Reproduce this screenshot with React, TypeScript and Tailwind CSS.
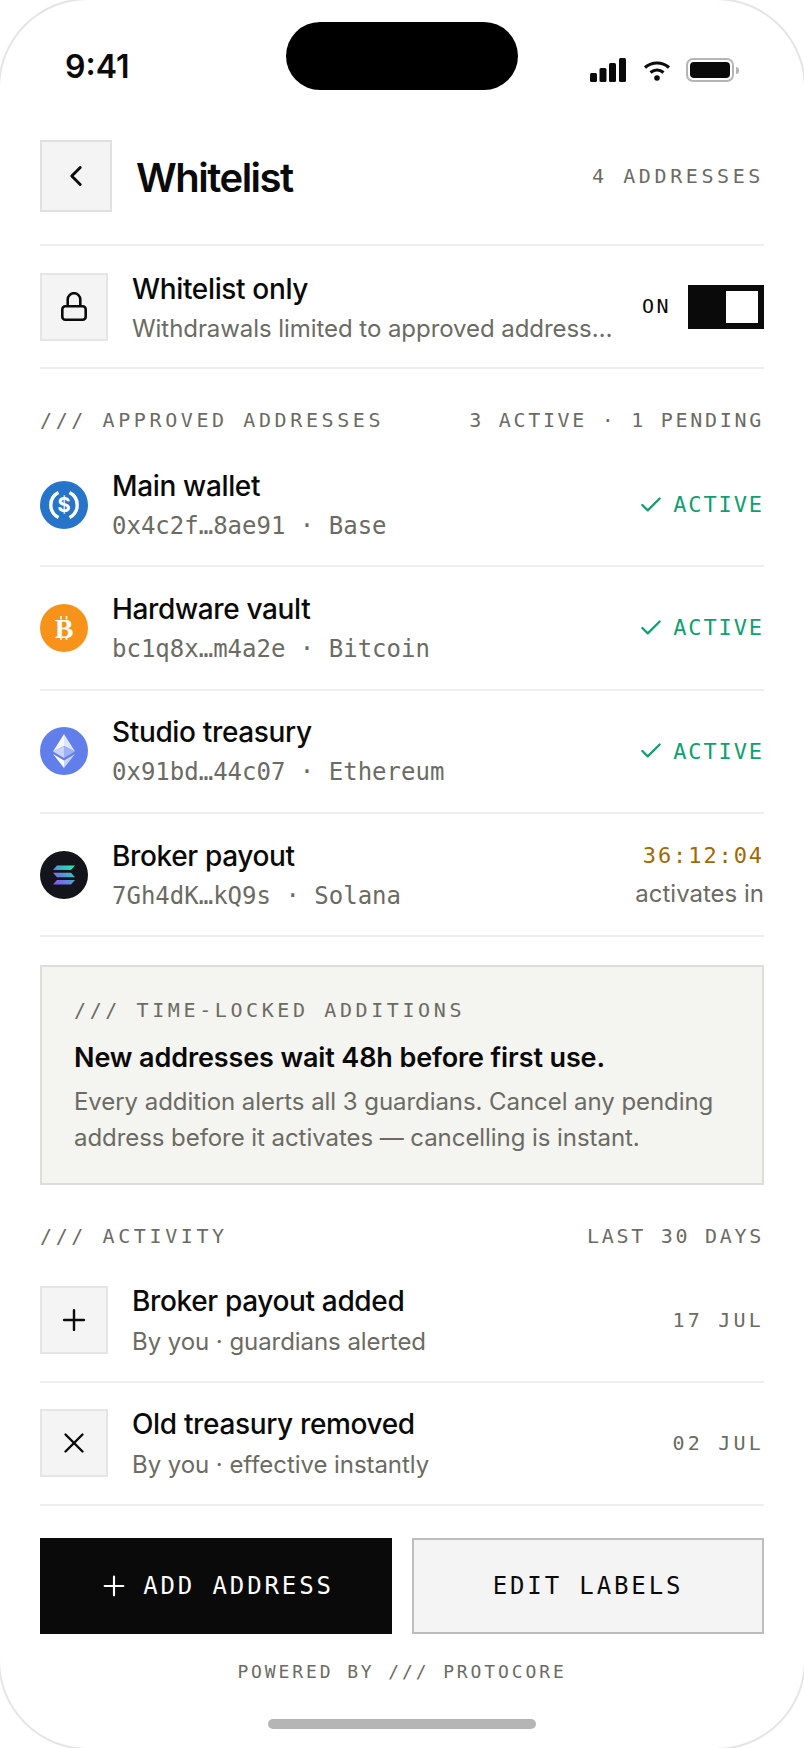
import { Check, ChevronLeft, Plus, X } from 'lucide-react';

const mono = "font-['DejaVu_Sans_Mono',monospace]";

function UsdcIcon() {
  return (
    <svg viewBox="0 0 48 48" className="w-12 h-12 shrink-0">
      <circle cx="24" cy="24" r="24" fill="#2775ca" />
      <path d="M18.5 11.5 A14 14 0 0 0 18.5 36.5" fill="none" stroke="#fff" strokeWidth="3.4" />
      <path d="M29.5 11.5 A14 14 0 0 1 29.5 36.5" fill="none" stroke="#fff" strokeWidth="3.4" />
      <text x="24" y="31" textAnchor="middle" fontSize="20" fontWeight="700" fill="#fff" fontFamily="Inter, sans-serif">$</text>
    </svg>
  );
}

function BtcIcon() {
  return (
    <svg viewBox="0 0 48 48" className="w-12 h-12 shrink-0">
      <circle cx="24" cy="24" r="24" fill="#f7931a" />
      <text x="24" y="33.500" textAnchor="middle" fontSize="28" fontWeight="700" fill="#fff" fontFamily="'Liberation Serif', serif">B</text>
      <path d="M21 12v3.500M26.500 12v3.500M21 33v3M26.500 33v3" stroke="#fff" strokeWidth="1.600" />
    </svg>
  );
}

function EthIcon() {
  return (
    <svg viewBox="0 0 48 48" className="w-12 h-12 shrink-0">
      <circle cx="24" cy="24" r="24" fill="#627eea" />
      <path d="M24 7 L13 24.500 L24 19z" fill="#fff" fillOpacity="0.95" />
      <path d="M24 7 L35 24.500 L24 19z" fill="#fff" fillOpacity="0.8" />
      <path d="M13 24.500 L24 19 L24 31z" fill="#c9d4fa" />
      <path d="M35 24.500 L24 19 L24 31z" fill="#9fb2f5" />
      <path d="M13 27 L24 33.500 L24 41z" fill="#fff" />
      <path d="M35 27 L24 33.500 L24 41z" fill="#c9d4fa" />
    </svg>
  );
}

function SolIcon() {
  return (
    <svg viewBox="0 0 48 48" className="w-12 h-12 shrink-0">
      <defs>
        <linearGradient id="sol" x1="0" y1="1" x2="1" y2="0">
          <stop offset="0" stopColor="#9945ff" />
          <stop offset="0.5" stopColor="#5497d5" />
          <stop offset="1" stopColor="#19fb9b" />
        </linearGradient>
      </defs>
      <circle cx="24" cy="24" r="24" fill="#14141c" />
      <path d="M17 14.500h18l-4 4.500h-18z M13 21.700h18l4 4.500h-18z M17 29h18l-4 4.500h-18z" fill="url(#sol)" />
    </svg>
  );
}

function SectionHeading({ left, right, rightClass }: { left: string; right: string; rightClass: string }) {
  return (
    <div className={`flex justify-between text-[20px] leading-[30px] text-[#6b6b63] whitespace-nowrap ${mono}`}>
      <span className="tracking-[3.6px]">{left}</span>
      <span className={rightClass}>{right}</span>
    </div>
  );
}

const addresses = [
  { name: 'Main wallet', sub: '0x4c2f…8ae91 · Base', icon: <UsdcIcon /> },
  { name: 'Hardware vault', sub: 'bc1q8x…m4a2e · Bitcoin', icon: <BtcIcon /> },
  { name: 'Studio treasury', sub: '0x91bd…44c07 · Ethereum', icon: <EthIcon /> },
  { name: 'Broker payout', sub: '7Gh4dK…kQ9s · Solana', icon: <SolIcon />, pending: true },
];

const activity = [
  { title: 'Broker payout added', sub: 'By you · guardians alerted', date: '17 JUL', icon: <Plus size={34} strokeWidth={1.7} /> },
  { title: 'Old treasury removed', sub: 'By you · effective instantly', date: '02 JUL', icon: <X size={34} strokeWidth={1.7} /> },
];

export default function App() {
  return (
    <div className="w-[804px] h-[1748px] bg-white overflow-hidden">
      <div className="relative w-[804px] h-[1748px] rounded-[88px] shadow-[0_0_0_2px_#e5e5e5] font-['Inter',sans-serif] text-[#0a0a0a]">
        <div className="absolute left-[286px] top-[22px] w-[232px] h-[68px] rounded-[34px] bg-black" />

        <div className="flex justify-between items-center h-[140px] px-[65px]">
          <span className="text-[32px] leading-[40px] font-semibold mb-[6px]">9:41</span>
          <div className="flex items-center">
            <svg width="36" height="24" viewBox="0 0 36 24" className="mr-[17px]">
              <rect x="0" y="15" width="7" height="9" rx="1.500" fill="#0a0a0a" />
              <rect x="9.500" y="10" width="7" height="14" rx="1.500" fill="#0a0a0a" />
              <rect x="19" y="5" width="7" height="19" rx="1.500" fill="#0a0a0a" />
              <rect x="29" y="0" width="7" height="24" rx="1.500" fill="#0a0a0a" />
            </svg>
            <svg width="28" height="21" viewBox="0 0 28 21" className="mr-[15px]" fill="none" stroke="#0a0a0a" strokeWidth="3.200">
              <path d="M2 7.500 C9 1.500 19 1.500 26 7.500" />
              <path d="M7.500 12.500 C11.500 9.200 16.500 9.200 20.500 12.500" />
              <circle cx="14" cy="18" r="2.800" fill="#0a0a0a" stroke="none" />
            </svg>
            <div className="box-border w-[48px] h-[24px] border-2 border-[#b5b5b5] rounded-[7px] p-[2px]">
              <div className="w-full h-full bg-[#0a0a0a] rounded-[4px]" />
            </div>
            <div className="w-[3px] h-[7px] ml-[2px] bg-[#b5b5b5] rounded-r-[3px]" />
          </div>
        </div>

        <div className="px-[40px]">
          <div className="flex items-center h-[72px]">
            <div className="box-border w-[72px] h-[72px] border-2 border-[#e0e0e0] bg-[#f4f4f4] flex items-center justify-center">
              <ChevronLeft size={34} strokeWidth={2} />
            </div>
            <h1 className="ml-[24px] pt-[3px] text-[40px] leading-[48px] font-semibold tracking-[-1.5px]">Whitelist</h1>
            <span className={`ml-auto text-[20px] text-[#6b6b63] tracking-[3.6px] ${mono}`}>4 ADDRESSES</span>
          </div>
          <div className="h-[2px] mt-[32px] bg-[#eeeeee]" />

          <div className="flex items-center h-[121px] border-b-2 border-[#eeeeee] box-content">
            <div className="box-border w-[68px] h-[68px] shrink-0 border-2 border-[#e5e5e5] bg-[#f4f4f4] flex items-center justify-center">
              <svg width="26" height="29" viewBox="0 0 26 29" fill="none" stroke="#0a0a0a" strokeWidth="2.600">
                <rect x="1.300" y="14.200" width="23.400" height="13.500" rx="3" />
                <path d="M6.700 14 V7.500 a6.300 6.300 0 0 1 12.600 0 V14" />
              </svg>
            </div>
            <div className="ml-[24px] pt-[4px] min-w-0 w-[486px]">
              <div className="text-[28px] leading-[36px] font-medium tracking-[-0.35px]">Whitelist only</div>
              <div className="mt-[4px] text-[24px] leading-[36px] tracking-[-0.06px] text-[#6b6b63] truncate">Withdrawals limited to approved addresses only</div>
            </div>
            <span className={`ml-auto mr-[17px] mb-[2px] text-[20px] tracking-[2.4px] ${mono}`}>ON</span>
            <div className="box-border w-[76px] h-[44px] bg-[#0a0a0a] p-[6px] flex justify-end shrink-0">
              <div className="w-[32px] h-[32px] bg-white" />
            </div>
          </div>

          <div className="mt-[36px]">
            <SectionHeading left="/// APPROVED ADDRESSES" right="3 ACTIVE · 1 PENDING" rightClass="tracking-[2.7px]" />
          </div>

          <div className="mt-[9px]">
            {addresses.map((a) => (
              <div key={a.name} className="flex items-center h-[123.33px] border-b-2 border-[#eeeeee]">
                {a.icon}
                <div className="ml-[24px] pt-[2px]">
                  <div className="text-[28px] leading-[36px] font-medium tracking-[-0.35px]">{a.name}</div>
                  <div className={`mt-[4px] text-[24px] leading-[36px] text-[#6b6b63] whitespace-pre ${mono}`}>{a.sub}</div>
                </div>
                {a.pending ? (
                  <div className="ml-auto text-right">
                    <div className={`text-[22px] leading-[32px] text-[#a16a00] tracking-[1.9px] ${mono}`}>36:12:04</div>
                    <div className="mt-[7px] text-[24px] leading-[30px] text-[#6b6b63]">activates in</div>
                  </div>
                ) : (
                  <div className="ml-auto flex items-center text-[#10a070]">
                    <Check size={26} strokeWidth={2.1} />
                    <span className={`ml-[9px] text-[22px] tracking-[1.9px] ${mono}`}>ACTIVE</span>
                  </div>
                )}
              </div>
            ))}
          </div>

          <div className="box-border h-[220px] mt-[28px] border-2 border-[#dddddb] bg-[#f4f4f0] px-[32px] pt-[28px]">
            <div className={`text-[20px] leading-[30px] text-[#6b6b63] tracking-[3.6px] ${mono}`}>/// TIME-LOCKED ADDITIONS</div>
            <div className="mt-[15px] text-[27px] leading-[36px] font-semibold tracking-[-0.12px]">New addresses wait 48h before first use.</div>
            <div className="mt-[8px] text-[24px] leading-[36px] tracking-[-0.06px] text-[#6b6b63]">
              Every addition alerts all 3 guardians. Cancel any pending address before it activates — cancelling is instant.
            </div>
          </div>

          <div className="mt-[36px]">
            <SectionHeading left="/// ACTIVITY" right="LAST 30 DAYS" rightClass="tracking-[2.7px]" />
          </div>

          <div className="mt-[9px]">
            {activity.map((r) => (
              <div key={r.title} className="flex items-center h-[123px] pb-[2px] border-b-2 border-[#eeeeee]">
                <div className="box-border w-[68px] h-[68px] shrink-0 border-2 border-[#e5e5e5] bg-[#f4f4f4] flex items-center justify-center">
                  {r.icon}
                </div>
                <div className="ml-[24px] pt-[3px]">
                  <div className="text-[28px] leading-[36px] font-medium tracking-[-0.35px]">{r.title}</div>
                  <div className="mt-[5px] text-[24px] leading-[36px] tracking-[-0.06px] text-[#6b6b63]">{r.sub}</div>
                </div>
                <span className={`ml-auto text-[20px] text-[#6b6b63] tracking-[3.2px] ${mono}`}>{r.date}</span>
              </div>
            ))}
          </div>

          <div className="flex gap-[20px] mt-[32px]">
            <button className={`w-[352px] shrink-0 h-[96px] bg-[#0a0a0a] text-white flex items-center justify-center text-[24px] tracking-[2.88px] ${mono}`}>
              <Plus size={32} strokeWidth={1.6} className="mr-[13px]" />
              ADD ADDRESS
            </button>
            <button className={`w-[352px] shrink-0 box-border h-[96px] bg-[#f4f4f4] border-2 border-[#bdbdbd] text-[#0a0a0a] flex items-center justify-center text-[24px] tracking-[2.88px] ${mono}`}>
              EDIT LABELS
            </button>
          </div>

          <div className={`mt-[23px] text-center text-[18px] leading-[30px] text-[#6b6b63] tracking-[2.88px] ${mono}`}>POWERED BY /// PROTOCORE</div>
          <div className="mx-auto mt-[32px] w-[268px] h-[10px] rounded-full bg-[#b5b5b5]" />
        </div>
      </div>
    </div>
  );
}
